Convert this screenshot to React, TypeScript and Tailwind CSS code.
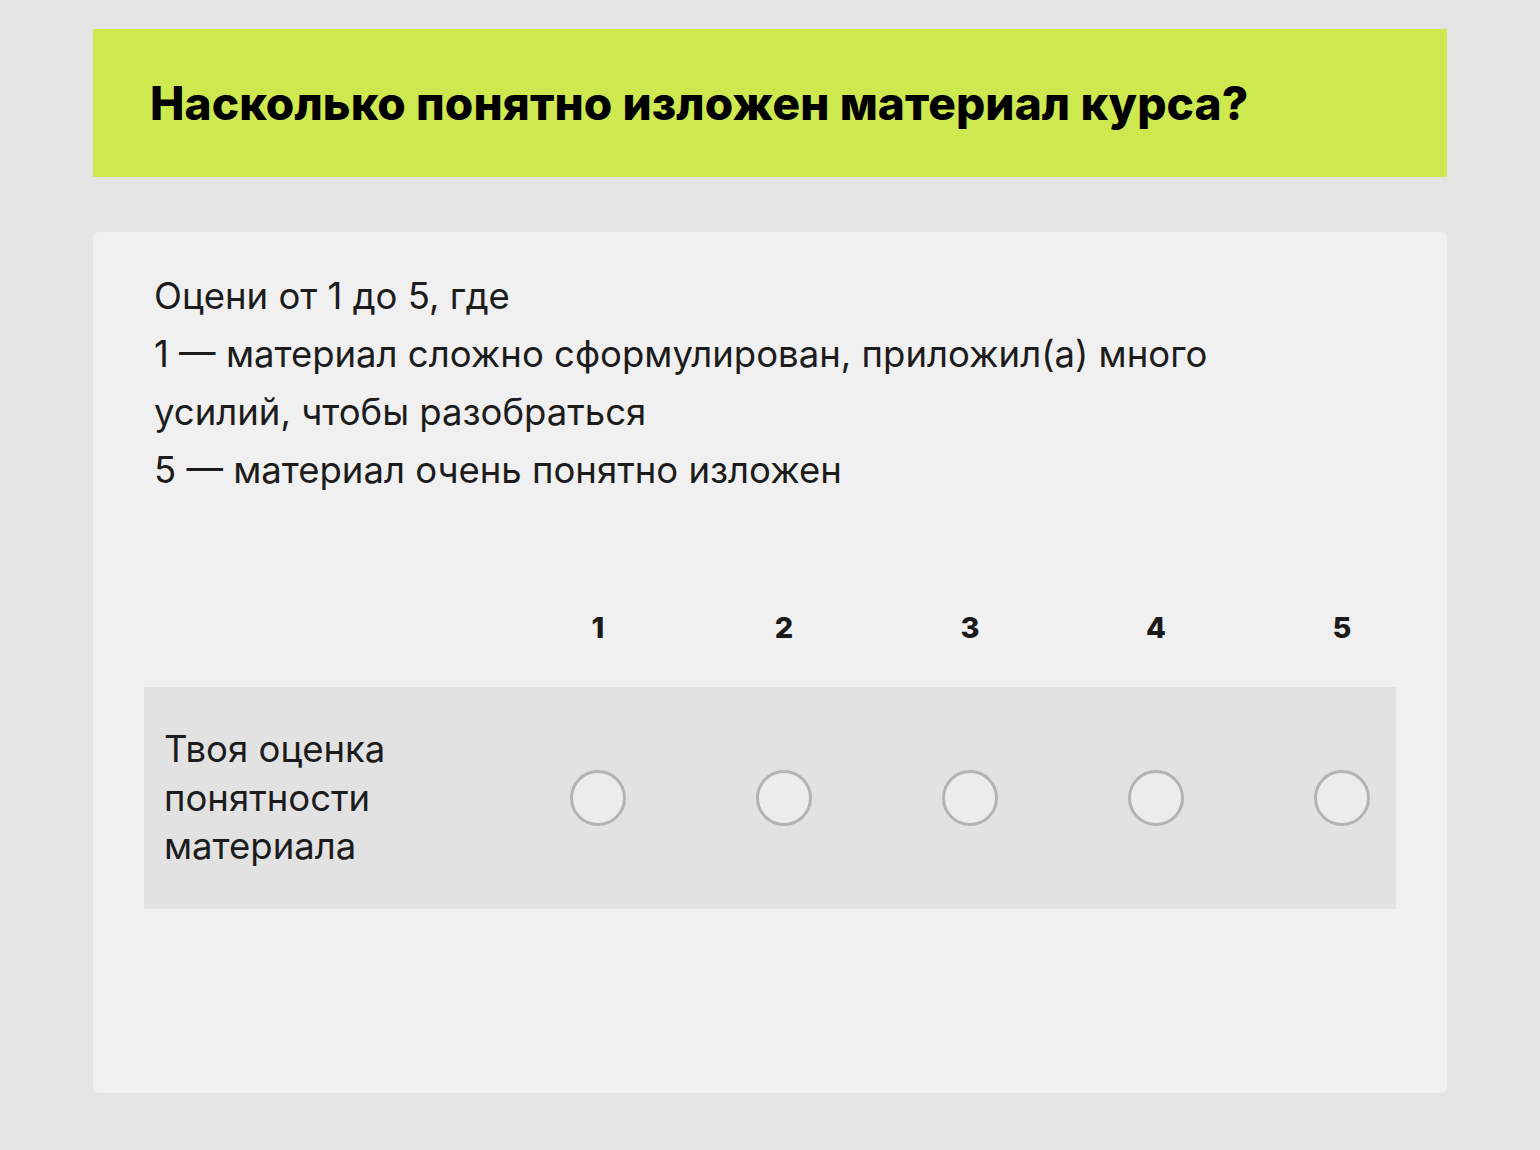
export default function App() {
  const cols = [1, 2, 3, 4, 5];
  return (
    <main className="min-h-screen w-full bg-[#e4e4e4] px-[93px] pt-[29px] pb-[57px] font-['Inter',sans-serif]">
      <div className="h-[148px] bg-[#cde94f] flex items-center pl-[57px]">
        <h1 className="text-[46px] font-extrabold text-black tracking-[0.1px]">
          Насколько понятно изложен материал курса?
        </h1>
      </div>

      <section className="mt-[55px] h-[861px] rounded-md bg-[#f0f0f0] pt-[35px] px-[51px]">
        <p className="pl-[10px] text-[36.5px] leading-[58px] text-[#1c1c1c]">
          Оцени от 1 до 5, где
          <br />
          1 — материал сложно сформулирован, приложил(а) много
          <br />
          усилий, чтобы разобраться
          <br />
          5 — материал очень понятно изложен
        </p>

        <div className="mt-[112px] flex pl-[426px] gap-[130px]">
          {cols.map((n) => (
            <div key={n} className="w-[56px] text-center text-[29px] leading-[34px] font-extrabold text-[#1a1a1a]">
              {n}
            </div>
          ))}
        </div>

        <div className="mt-[42px] h-[222px] bg-[#e2e2e2] flex items-center">
          <div className="w-[426px] pl-[20px] text-[36.5px] leading-[48.5px] text-[#1c1c1c]">
            Твоя оценка
            <br />
            понятности
            <br />
            материала
          </div>
          <div className="flex gap-[130px]">
            {cols.map((n) => (
              <button
                key={n}
                aria-label={`Оценка ${n}`}
                className="w-[56px] h-[56px] rounded-full border-[3px] border-[#b3b3b3] bg-[#ececec]"
              />
            ))}
          </div>
        </div>
      </section>
    </main>
  );
}
